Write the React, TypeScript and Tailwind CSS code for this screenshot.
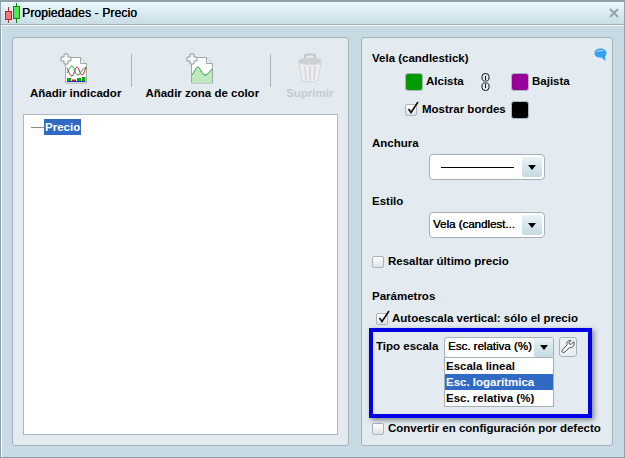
import { ReactNode } from "react";

function AddBadge() {
  return (
    <path
      d="M4 1h4v3h3v4H8v3H4V8H1V4h3z"
      fill="#f4f6f6"
      stroke="#8f9a9e"
      strokeWidth="1"
    />
  );
}

function IndicatorIcon() {
  return (
    <svg width="28" height="31" viewBox="0 0 28 31">
      <path d="M5.500 4.500h15l6 6v19.500h-21z" fill="#fff" stroke="#a3a8aa" />
      <path d="M20.500 4.500v6h6" fill="#eceeee" stroke="#a3a8aa" />
      <path d="M7 15c2 4 3 8 5 8s3-9 5-9 3 8 5 8 3-6 4-8" fill="none" stroke="#c8102e" />
      <path d="M7 20c2-3 3-7 5-7s3 9 6 9 4-8 8-7" fill="none" stroke="#1aa33a" />
      <rect x="7" y="25" width="4" height="3" fill="#10a810" />
      <rect x="12" y="26.500" width="4" height="1.500" fill="#d81840" />
      <rect x="17" y="25" width="4" height="3" fill="#10a810" />
      <rect x="22" y="24" width="3.500" height="4" fill="#10a810" />
      <rect x="7" y="28" width="18.500" height="1" fill="#2030c0" />
      <AddBadge />
    </svg>
  );
}

function ZoneIcon() {
  return (
    <svg width="28" height="31" viewBox="0 0 28 31">
      <path d="M5.500 4.500h15l6 6v19.500h-21z" fill="#fff" stroke="#a3a8aa" />
      <path d="M20.500 4.500v6h6" fill="#eceeee" stroke="#a3a8aa" />
      <path d="M6 22c3-4 4-8 6-8s4 8 7 8 4-3 7-6v14H6z" fill="#bfe8bf" />
      <path d="M6 22c3-4 4-8 6-8s4 8 7 8 4-3 7-6" fill="none" stroke="#1aa33a" />
      <AddBadge />
    </svg>
  );
}

function TrashIcon() {
  return (
    <svg width="28" height="31" viewBox="0 0 28 31">
      <path d="M9 6V3.500C9 2 10 1.500 11 1.500h6c1 0 2 .5 2 2V6" fill="none" stroke="#c0c6c8" strokeWidth="2" />
      <ellipse cx="14" cy="8" rx="12" ry="3.500" fill="#ccd1d3" />
      <path d="M3 10c3 2 19 2 22 0l-3 17c-1 2.500-15 2.500-16 0z" fill="#eceef0" stroke="#d2d6d8" />
      <path d="M9 13l1 14M14 13v15M19 13l-1 14" stroke="#cfd4d6" strokeWidth="1.500" />
    </svg>
  );
}

function ToolButton({ icon, label, muted }: { icon: ReactNode; label: string; muted?: boolean }) {
  return (
    <div className="flex flex-col items-center">
      <div className={`h-[31px] ${muted ? "" : "mr-[4px]"}`}>{icon}</div>
      <span className={`mt-[2px] whitespace-nowrap leading-[14px] ${muted ? "text-[#c3cbcf]" : "text-black"}`}>
        {label}
      </span>
    </div>
  );
}

function Checkbox({ checked }: { checked?: boolean }) {
  return (
    <span className="relative block h-[12px] w-[12px] shrink-0 rounded-[2px] border border-[#aab4b9] bg-gradient-to-b from-white to-[#dde2e5]">
      {checked && (
        <svg className="absolute left-[0px] top-[-5px]" width="14" height="15" viewBox="0 0 14 15">
          <path d="M2.500 9l2.500 3.500L12 2" fill="none" stroke="#111" strokeWidth="1.600" />
        </svg>
      )}
    </span>
  );
}

function Swatch({ color }: { color: string }) {
  return <span className="block h-[18px] w-[18px] rounded-[3px] border border-[#a9b6bd]" style={{ backgroundColor: color }} />;
}

function ArrowBox({ small }: { small?: boolean }) {
  return (
    <span
      className={`flex items-center justify-center rounded-[2px] bg-gradient-to-b from-[#e8f4f7] to-[#c5d9e2] ${
        small ? "h-[19px] w-[19px]" : "h-[20px] w-[20px]"
      }`}
    >
      <span className="h-0 w-0 border-x-[4.500px] border-t-[5px] border-x-transparent border-t-black" />
    </span>
  );
}

function LinkIcon() {
  return (
    <svg width="9" height="18" viewBox="0 0 9 18">
      <path d="M1 5V3.500a3.500 3 0 0 1 7 0V5c0 3-2 3-3.500 3S1 8 1 5zM4.500 3v4" fill="none" stroke="#111" />
      <path d="M1 13v1.500a3.500 3 0 0 0 7 0V13c0-3-2-3-3.500-3S1 10 1 13zM4.500 15v-4" fill="none" stroke="#111" />
    </svg>
  );
}

function WrenchIcon() {
  return (
    <svg width="14" height="14" viewBox="0 0 16 16">
      <path
        d="M14.500 2l-3 3-2-.5-.5-2 3-2.500C8.500 0 6 2 7 5.500L1.500 11.500c-1.500 1.500 1 4 2.500 2.500L10 8.500c3.500.5 6-2.500 4.500-6.500z"
        fill="#fff"
        stroke="#333"
        strokeWidth="1"
      />
    </svg>
  );
}

export default function App() {
  return (
    <div className="flex h-[458px] w-[625px] flex-col border border-t-2 border-[#8fa0a8] bg-[#c8dae4] font-['Liberation_Sans',Arial,sans-serif] text-[11.500px] font-bold text-black shadow-[inset_1px_0_0_#fff]">
      <div className="flex h-[23px] shrink-0 items-center border-b border-[#a4b3ba] bg-gradient-to-b from-[#e9f9fc] to-[#c9dde5] shadow-[0_1px_0_#f2f8fa]">
        <svg className="ml-[3px]" width="18" height="20" viewBox="0 0 18 20">
          <path d="M4.500 4v16" stroke="#c03030" />
          <rect x="1.500" y="8.500" width="6" height="8" fill="#f87878" stroke="#b02828" />
          <path d="M12.500 0v20" stroke="#108010" />
          <rect x="9.500" y="3.500" width="6" height="12" fill="#50e850" stroke="#108810" />
        </svg>
        <span className="text-[12px] font-normal tracking-[0.15px] [text-shadow:0.3px_0_0_#000]">Propiedades - Precio</span>
        <svg className="ml-auto mr-[5px]" width="10" height="10" viewBox="0 0 10 10">
          <path d="M1 1l8 8M9 1l-8 8" stroke="#94a2a9" strokeWidth="2" />
        </svg>
      </div>

      <div className="flex flex-1 gap-[12px] pb-[11px] pl-[11px] pr-[11px] pt-[12px]">
        <section className="flex w-[337px] flex-col rounded-[3px] border border-[#a3b1b8] bg-[#e3ebf1] px-[10px] pb-[10px]">
          <div className="flex h-[76px] shrink-0 items-start pt-[15px]">
            <div className="ml-[7px]"><ToolButton icon={<IndicatorIcon />} label="Añadir indicador" /></div>
            <span className="ml-[10px] mt-[1px] h-[33px] w-px bg-[#a9b5bb]" />
            <div className="ml-[13px]"><ToolButton icon={<ZoneIcon />} label="Añadir zona de color" /></div>
            <span className="ml-[11px] mt-[1px] h-[33px] w-px bg-[#a9b5bb]" />
            <div className="ml-[15px]"><ToolButton icon={<TrashIcon />} label="Suprimir" muted /></div>
          </div>
          <div className="flex-1 border border-[#a9b9c2] bg-white pl-[7px] pt-[4px]">
            <div className="flex h-[16px] items-center">
              <span className="h-px w-[13px] bg-[#8a8a8a]" />
              <span className="bg-[#316ac5] px-px leading-[16px] text-white">Precio</span>
            </div>
          </div>
        </section>

        <section className="relative flex flex-1 flex-col rounded-[3px] border border-[#a3b1b8] bg-[#e3ebf1] pl-[10px] pt-[13px]">
          <svg className="absolute right-[5px] top-[10px]" width="13" height="14" viewBox="0 0 13 14">
            <path d="M6.500 0.500c3.500 0 6 2 6 4.500 0 1.500-.5 2.500-1.500 3.500L11.500 13 7.500 9.500C3 10 .5 8 .5 5 .5 2.500 3 .5 6.500.5z" fill="#38a0f0" />
            <path d="M2 4c1-2 5-3 9-1-3 0-6 0-9 1z" fill="#a8e0ff" />
          </svg>
          <h3 className="leading-[14px]">Vela (candlestick)</h3>
          <div className="ml-[33px] mt-[8px] flex h-[18px] items-center">
            <Swatch color="#009900" />
            <span className="ml-[3px] w-[55px]">Alcista</span>
            <LinkIcon />
            <span className="ml-[21px]"><Swatch color="#990099" /></span>
            <span className="ml-[3px]">Bajista</span>
          </div>
          <div className="ml-[33px] mt-[10px] flex h-[18px] items-center">
            <Checkbox checked />
            <span className="ml-[5px]">Mostrar bordes</span>
            <span className="ml-[5px]"><Swatch color="#000000" /></span>
          </div>
          <h3 className="mt-[17px] leading-[14px]">Anchura</h3>
          <div className="ml-[57px] mt-[4px] flex h-[26px] w-[116px] items-center rounded-[4px] border border-[#a3b1b8] bg-white pr-[2px]">
            <span className="ml-[11px] h-px w-[73px] bg-black" />
            <span className="ml-auto"><ArrowBox /></span>
          </div>
          <h3 className="mt-[14px] leading-[14px]">Estilo</h3>
          <div className="ml-[57px] mt-[4px] flex h-[26px] w-[116px] items-center rounded-[4px] border border-[#a3b1b8] bg-white pl-[3px] pr-[2px]">
            <span className="font-normal [text-shadow:0.3px_0_0_#000]">Vela (candlest...</span>
            <span className="ml-auto"><ArrowBox /></span>
          </div>
          <div className="mt-[17px] flex h-[14px] items-center">
            <Checkbox />
            <span className="ml-[4px]">Resaltar último precio</span>
          </div>
          <h3 className="mt-[20px] leading-[14px]">Parámetros</h3>
          <div className="ml-[4px] mt-[9px] flex h-[14px] items-center">
            <Checkbox checked />
            <span className="ml-[4px]">Autoescala vertical: sólo el precio</span>
          </div>
          <div className="relative ml-[4px] mt-[11px] flex h-[20px] items-center">
            <span className="w-[68px]">Tipo escala</span>
            <div className="flex h-[21px] w-[110px] items-center rounded-[3px] border border-[#a3b1b8] bg-white pl-[3px]">
              <span className="font-normal [text-shadow:0.3px_0_0_#000]">Esc. relativa (%)</span>
              <span className="ml-auto"><ArrowBox small /></span>
            </div>
            <span className="ml-[5px] flex h-[20px] w-[18px] items-center justify-center rounded-[3px] border border-[#a3b1b8] bg-[#e9eff3]">
              <WrenchIcon />
            </span>
            <div className="absolute left-[68px] top-[20px] w-[110px] border border-[#a3b1b8] bg-white leading-[16px]">
              <div className="px-[1px]">Escala lineal</div>
              <div className="bg-[#316ac5] px-[1px] text-white">Esc. logarítmica</div>
              <div className="px-[1px]">Esc. relativa (%)</div>
            </div>
          </div>
          <div className="absolute left-[10px] top-[384px] flex h-[14px] items-center">
            <Checkbox />
            <span className="ml-[4px]">Convertir en configuración por defecto</span>
          </div>
          <div className="pointer-events-none absolute left-[7px] top-[290px] h-[90px] w-[223px] border-[4px] border-[#0000e6] shadow-[2px_2px_5px_rgba(0,0,0,0.45)]" />
        </section>
      </div>
    </div>
  );
}
